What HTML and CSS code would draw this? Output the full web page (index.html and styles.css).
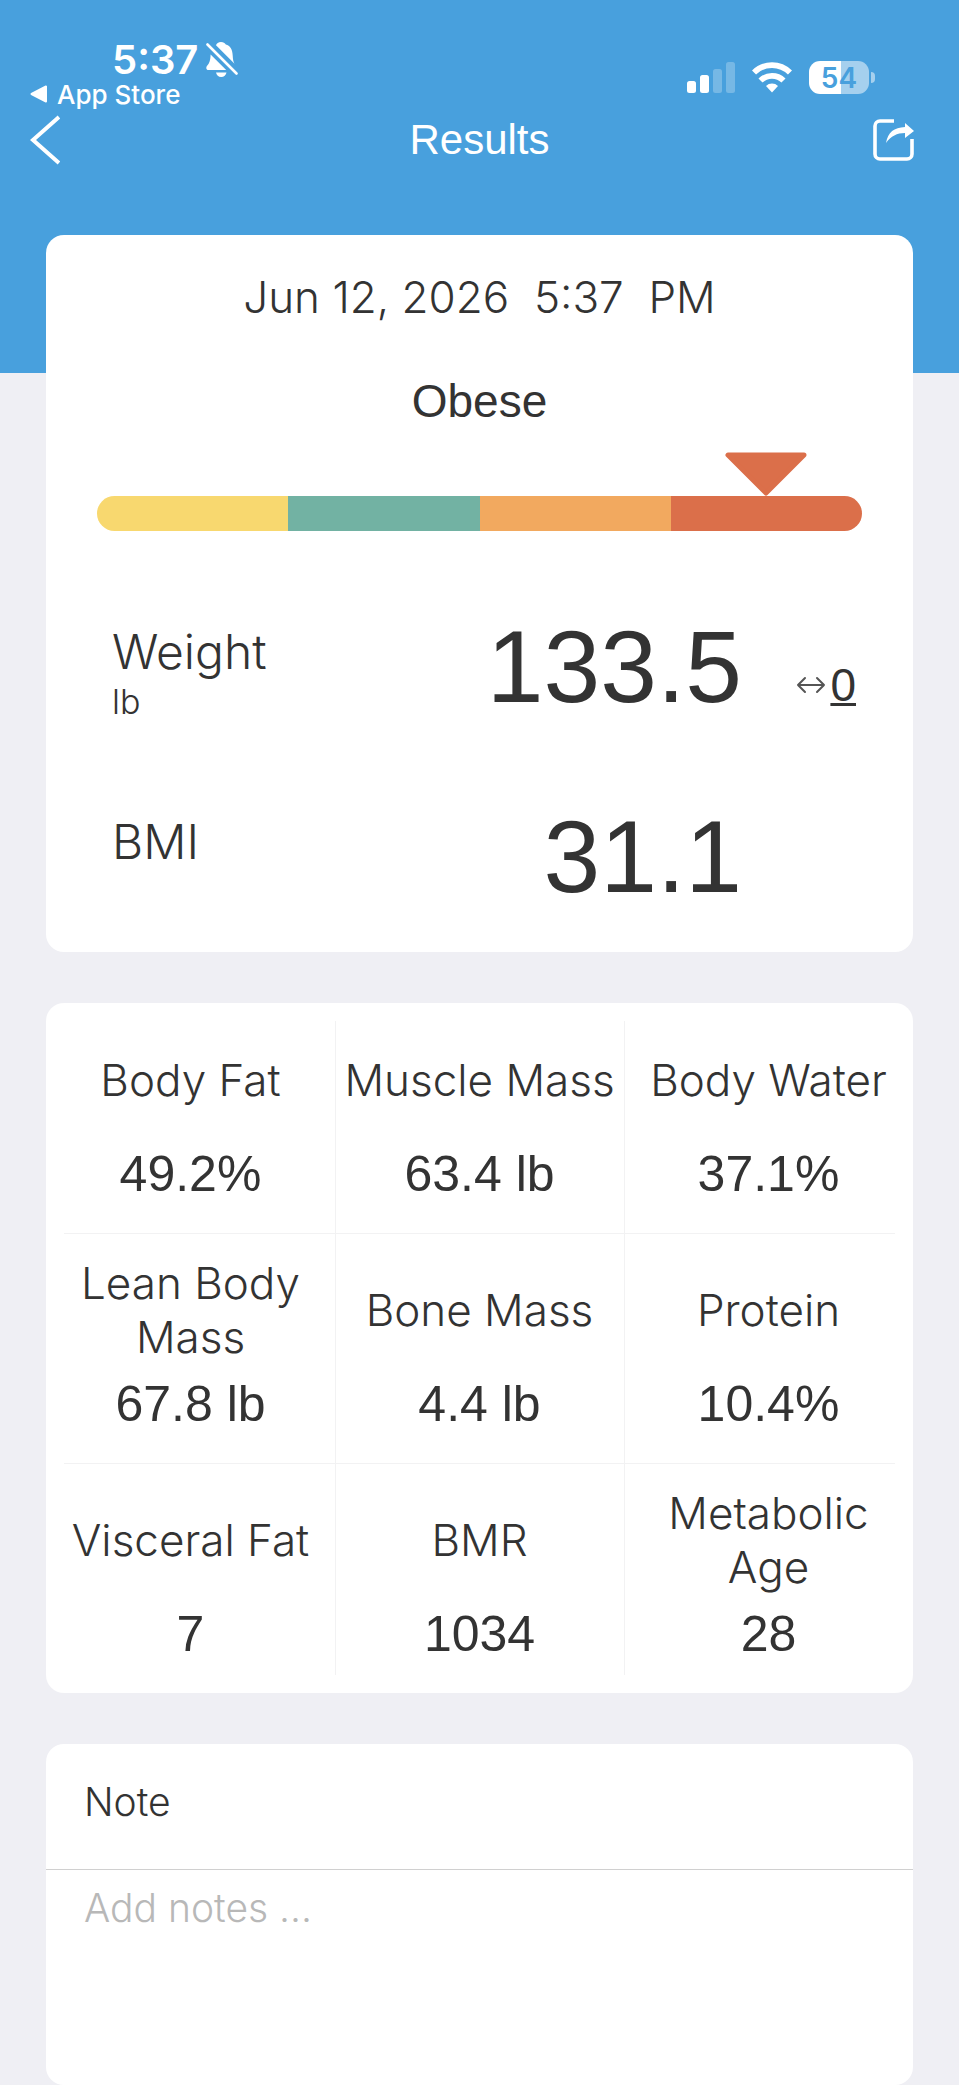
FILE: index.html
```html
<!DOCTYPE html>
<html lang="en">
<head>
  <meta charset="UTF-8">
  <meta name="viewport" content="width=device-width, initial-scale=1">
  <title>Results</title>
  <link rel="stylesheet" href="styles.css">
</head>
<body>
  <header class="header">
    <div class="status-bar">
      <div class="status-left">
        <div class="clock">
          <span>5:37</span>
          <svg class="bell" viewBox="0 0 32 35" aria-hidden="true">
            <path d="M15 0c-2.600 0-4.500 1.400-5 3.200l18.500 18.500c-1.300-2-1.600-4.600-1.800-8.200C26.500 7.500 24 3.500 19.800 2.600 19 1 17.300 0 15 0z" fill="#fff"/>
            <path d="M4.600 12.500c-.2 5.500-1 8.500-3.500 11.300C-.4 25.700.2 28 2.600 28h17.600z" fill="#fff"/>
            <path d="M10 30.500h10.500C20 33 18 35 15.200 35S10.500 33 10 30.500z" fill="#fff"/>
            <path d="M1.500 2.500l29 29" stroke="#fff" stroke-width="2.600" stroke-linecap="round"/>
          </svg>
        </div>
        <a class="back-app" href="#">
          <svg width="17" height="18" viewBox="0 0 17 18" aria-hidden="true"><path d="M1.500 9L16 1.500v15z" fill="#fff" stroke="#fff" stroke-width="2" stroke-linejoin="round"/></svg>
          App Store
        </a>
      </div>
      <div class="status-right">
        <svg width="48" height="31" viewBox="0 0 48 31" fill="#fff" aria-hidden="true">
          <rect x="0" y="19" width="9" height="12" rx="2.500"/>
          <rect x="13" y="13" width="9" height="18" rx="2.500"/>
          <rect x="26" y="7" width="9" height="24" rx="2.500" opacity=".25"/>
          <rect x="39" y="0" width="9" height="31" rx="2.500" opacity=".25"/>
        </svg>
        <svg width="40" height="31" viewBox="0 0 40 31" fill="none" stroke="#fff" stroke-width="5.800" aria-hidden="true">
          <path d="M2 10.500a25.500 25.500 0 0 1 36 0"/>
          <path d="M8.500 18.500a16.500 16.500 0 0 1 23 0"/>
          <path d="M20 30.500l-6-6.500a8.600 8.600 0 0 1 12 0z" fill="#fff" stroke="none"/>
        </svg>
        <div class="battery"><span class="battery-level">54</span></div>
      </div>
    </div>
    <nav class="nav">
      <button class="icon-button" type="button" aria-label="Back">
        <svg width="30" height="50" viewBox="0 0 30 50" fill="none" stroke="#fff" stroke-width="4" aria-hidden="true"><path d="M29 2L3 25l26 23"/></svg>
      </button>
      <h1 class="title">Results</h1>
      <button class="icon-button share" type="button" aria-label="Share">
        <svg width="42" height="42" viewBox="0 0 42 42" aria-hidden="true">
          <path d="M21 2H7a5 5 0 0 0-5 5v28a5 5 0 0 0 5 5h27a5 5 0 0 0 5-5V20" fill="none" stroke="#fff" stroke-width="3.600"/>
          <path d="M13 24C15 13 21 8.500 32 8V4l9 8-9 7v-5c-8 0-14 3-19 10z" fill="#fff"/>
        </svg>
      </button>
    </nav>
  </header>

  <main class="content">
    <section class="card summary">
      <p class="date">Jun 12, 2026&nbsp; 5:37&nbsp; PM</p>
      <p class="verdict">Obese</p>
      <div class="gauge">
        <svg class="pointer" viewBox="0 0 82 44" aria-hidden="true"><path d="M3 3h76L41 41z" fill="#db6f4a" stroke="#db6f4a" stroke-width="5" stroke-linejoin="round"/></svg>
        <div class="scale">
          <span class="scale-low"></span>
          <span class="scale-normal"></span>
          <span class="scale-over"></span>
          <span class="scale-obese"></span>
        </div>
      </div>
      <div class="measure">
        <div class="measure-name">Weight<small>lb</small></div>
        <div class="measure-value">133.5</div>
        <button class="change" type="button">
          <svg width="30" height="18" viewBox="0 0 30 18" fill="none" stroke="#555" stroke-width="2" stroke-linecap="round" stroke-linejoin="round" aria-hidden="true"><path d="M2 9h26M9 2L2 9l7 7M21 2l7 7-7 7"/></svg>
          <span>0</span>
        </button>
      </div>
      <div class="measure">
        <div class="measure-name">BMI</div>
        <div class="measure-value">31.1</div>
      </div>
    </section>

    <section class="card details">
      <div class="detail"><h2>Body Fat</h2><p>49.2%</p></div>
      <div class="detail"><h2>Muscle Mass</h2><p>63.4 lb</p></div>
      <div class="detail"><h2>Body Water</h2><p>37.1%</p></div>
      <div class="detail"><h2>Lean Body Mass</h2><p>67.8 lb</p></div>
      <div class="detail"><h2>Bone Mass</h2><p>4.4 lb</p></div>
      <div class="detail"><h2>Protein</h2><p>10.4%</p></div>
      <div class="detail"><h2>Visceral Fat</h2><p>7</p></div>
      <div class="detail"><h2>BMR</h2><p>1034</p></div>
      <div class="detail"><h2>Metabolic Age</h2><p>28</p></div>
    </section>

    <section class="card note">
      <label for="note">Note</label>
      <textarea id="note" placeholder="Add notes ..."></textarea>
    </section>
  </main>
</body>
</html>
```
FILE: styles.css
```css
* {
  box-sizing: border-box;
}

body {
  margin: 0;
  background: #efeff4;
  color: #333;
  font-family: Inter, sans-serif;
  font-weight: 300;
}

h1, h2, p {
  margin: 0;
  font-weight: inherit;
}

button {
  padding: 0;
  border: none;
  background: none;
  color: inherit;
  font: inherit;
  cursor: pointer;
}

svg {
  display: block;
}

/* header */
.header {
  height: 373px;
  padding-top: 36px;
  background: #48a0dd;
  color: #fff;
}

.status-bar {
  display: flex;
  justify-content: space-between;
  height: 70px;
  padding: 0 90px 0 30px;
}

.clock {
  display: flex;
  align-items: center;
  gap: 8px;
  height: 46px;
  padding-left: 82px;
  font-size: 40px;
  font-weight: 600;
}

.bell {
  width: 32px;
  height: 35px;
}

.back-app {
  display: flex;
  align-items: center;
  gap: 10px;
  height: 24px;
  color: #fff;
  font-size: 26px;
  font-weight: 500;
  text-decoration: none;
}

.status-right {
  display: flex;
  align-items: center;
  gap: 17px;
  height: 82px;
}

.battery {
  position: relative;
  width: 60px;
  height: 33px;
  border-radius: 11px;
  background: linear-gradient(90deg, #fff 54%, #a5d0ee 54%);
  color: #48a0dd;
  font-size: 28px;
  font-weight: 600;
  line-height: 34px;
  text-align: center;
}

.battery::after {
  content: "";
  position: absolute;
  top: 11px;
  right: -6px;
  width: 4px;
  height: 11px;
  border-radius: 0 5px 5px 0;
  background: #a5d0ee;
}

.nav {
  display: grid;
  grid-template-columns: 1fr auto 1fr;
  align-items: center;
  height: 68px;
  padding: 0 30px;
}

.icon-button {
  justify-self: start;
}

.share {
  justify-self: end;
  margin-right: 14px;
}

.title {
  font-family: "Liberation Sans", sans-serif;
  font-size: 42px;
  font-weight: 400;
}

/* cards */
.content {
  display: flex;
  flex-direction: column;
  gap: 51px;
  margin-top: -138px;
  padding: 0 46px;
}

.card {
  border-radius: 18px;
  background: #fff;
}

.summary {
  padding: 34px 51px 31px;
}

.date,
.verdict {
  font-size: 44px;
  line-height: 56px;
  text-align: center;
}

.verdict {
  margin-top: 48px;
  font-family: "Liberation Sans", sans-serif;
  font-size: 46px;
  font-weight: 400;
}

.gauge {
  margin: 23px 0 80px;
}

.pointer {
  width: 82px;
  height: 44px;
  margin-left: calc(87.5% - 41px);
}

.scale {
  display: flex;
  height: 35px;
  border-radius: 18px;
  overflow: hidden;
}

.scale span {
  flex: 1;
}

.scale-low {
  background: #f8d86f;
}

.scale-normal {
  background: #72b2a3;
}

.scale-over {
  background: #f2a95f;
}

.scale-obese {
  background: #db6f4a;
}

.measure {
  display: grid;
  grid-template-columns: 1fr auto 114px;
  height: 120px;
  padding: 0 6px 0 15px;
}

.measure + .measure {
  margin-top: 70px;
}

.measure-name {
  padding-top: 12px;
  font-size: 48px;
  line-height: 58px;
}

.measure-name small {
  display: block;
  font-size: 34px;
  line-height: 42px;
}

.measure-value {
  font-family: "Liberation Sans", sans-serif;
  font-size: 102px;
  font-weight: 400;
  line-height: 112px;
}

.change {
  display: flex;
  align-items: center;
  justify-content: flex-end;
  gap: 4px;
  height: 52px;
  margin-top: 48px;
  font-family: "Liberation Sans", sans-serif;
  font-size: 46px;
  text-decoration: underline;
  text-decoration-thickness: 3px;
}

/* body composition grid, hairlines stop short of the card edges */
.details {
  display: grid;
  grid-template-columns: repeat(3, 1fr);
  background:
    linear-gradient(#f2f2f3, #f2f2f3) 33.4% center / 1px calc(100% - 36px),
    linear-gradient(#f2f2f3, #f2f2f3) 66.8% center / 1px calc(100% - 36px),
    linear-gradient(#f2f2f3, #f2f2f3) center 33.4% / calc(100% - 36px) 1px,
    linear-gradient(#f2f2f3, #f2f2f3) center 66.8% / calc(100% - 36px) 1px,
    #fff;
  background-repeat: no-repeat;
}

.detail {
  height: 230px;
  padding-top: 23px;
  text-align: center;
}

.detail h2 {
  display: flex;
  align-items: center;
  justify-content: center;
  height: 108px;
  padding: 0 8px;
  font-size: 44px;
  line-height: 54px;
}

.detail p {
  margin-top: 12px;
  font-family: "Liberation Sans", sans-serif;
  font-size: 50px;
  font-weight: 400;
  line-height: 56px;
}

/* note */
.note {
  overflow: hidden;
}

.note label {
  display: block;
  padding: 33px 38px 42px;
  border-bottom: 1px solid #d0d0d0;
  font-size: 39px;
  line-height: 50px;
}

.note textarea {
  display: block;
  width: 100%;
  height: 215px;
  padding: 13px 38px;
  border: none;
  outline: none;
  resize: none;
  background: none;
  color: inherit;
  font: inherit;
  font-size: 39px;
  line-height: 50px;
}

.note textarea::placeholder {
  color: #b8b8b8;
}
```
